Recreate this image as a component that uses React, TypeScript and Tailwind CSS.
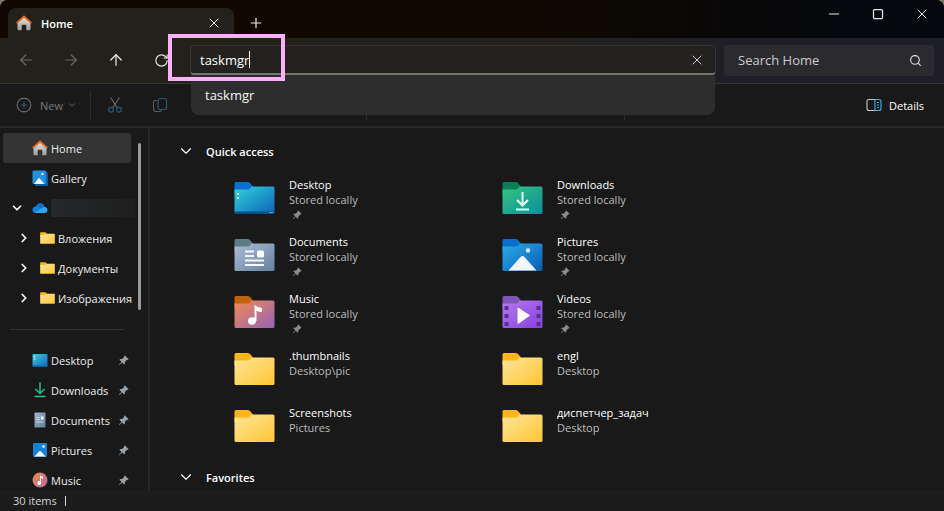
import { useId, useState } from "react";
import type { ReactNode } from "react";
import {
  ArrowLeft,
  ArrowRight,
  ArrowUp,
  ChevronDown,
  ChevronRight,
  Minus,
  Plus,
  RotateCw,
  Search,
  Square,
  X,
} from "lucide-react";
import { BsPinAngleFill } from "react-icons/bs";

type FolderKind =
  | "desktop"
  | "downloads"
  | "documents"
  | "pictures"
  | "music"
  | "videos"
  | "plain";

const folderColors: Record<FolderKind, { tab: string; from: string; to: string }> = {
  desktop: { tab: "#0a6fd0", from: "#33d3dc", to: "#0b62b8" },
  downloads: { tab: "#0b7d57", from: "#35c481", to: "#0d8f9b" },
  documents: { tab: "#5f7a87", from: "#adbdd3", to: "#6580a0" },
  pictures: { tab: "#0870cc", from: "#2cabe8", to: "#0a5cb4" },
  music: { tab: "#c1620f", from: "#f28a52", to: "#9463b8" },
  videos: { tab: "#7c57b5", from: "#b57af0", to: "#8640dd" },
  plain: { tab: "#fdb615", from: "#ffe599", to: "#fdc634" },
};

const glyphs: Partial<Record<FolderKind, ReactNode>> = {
  desktop: (
    <>
      <path d="M0.5 29.5H40.5V30.5Q40.5 32 39 32H2Q0.5 32 0.5 30.5Z" fill="#0c4e86" />
      <path d="M3 11h2v2H3zM3 15h2v2H3z" fill="#c9fbff" />
      <path d="M35 30.5h4" stroke="#6fa3cb" strokeWidth="1" />
    </>
  ),
  downloads: (
    <path
      d="M20.5 10V23M15 18L20.5 23.5L26 18M14 27.5H27"
      stroke="#e6fff5"
      strokeWidth="2"
      fill="none"
    />
  ),
  documents: (
    <>
      <path d="M11 12.5h9M11 17h9M11 21.5h19M11 26h19" stroke="#f4f8fd" strokeWidth="2" />
      <rect x="23" y="11.5" width="7" height="7" rx="1.5" fill="#fff" />
    </>
  ),
  pictures: (
    <>
      <path d="M6.5 31.5L18.5 18Q20.5 16 22.5 18L34.5 31.5Z" fill="#f1f6ff" />
      <circle cx="26" cy="11.5" r="2.2" fill="#d9f4ff" />
    </>
  ),
  music: (
    <>
      <path d="M21 9Q24 12 28 12V16Q25 16 22.5 14.5V25H20.5V9Z" fill="#fff" />
      <ellipse cx="18" cy="25" rx="4" ry="3.8" fill="#fff" />
    </>
  ),
  videos: (
    <>
      <path
        d="M2.5 10h4v4h-4zM2.5 18h4v4h-4zM2.5 26h4v4h-4zM34.5 10h4v4h-4zM34.5 18h4v4h-4zM34.5 26h4v4h-4z"
        fill="#55308f"
      />
      <path d="M16 12L27.5 19.5L16 27.5Z" fill="#fff" stroke="#fff" strokeLinejoin="round" />
    </>
  ),
};

function Folder({ kind, className }: { kind: FolderKind; className: string }) {
  const id = useId();
  const { tab, from, to } = folderColors[kind];
  return (
    <svg viewBox="0 0 41 32" className={className} aria-hidden="true">
      <defs>
        <linearGradient id={id} x1="0" y1="0" x2="1" y2="1">
          <stop offset="0" stopColor={from} />
          <stop offset="1" stopColor={to} />
        </linearGradient>
      </defs>
      <path d="M2 0H13.5Q15 0 16 1L19 4.5V12H0.5V1.5Q0.5 0 2 0Z" fill={tab} />
      <path
        d="M0.5 7.5H14Q15.5 7.5 16.5 6L17.5 4.5H39Q40.5 4.5 40.5 6V30.5Q40.5 32 39 32H2Q0.5 32 0.5 30.5Z"
        fill={`url(#${id})`}
      />
      {glyphs[kind]}
    </svg>
  );
}

function HomeIcon() {
  const id = useId();
  return (
    <svg viewBox="0 0 16 16" className="size-4" aria-hidden="true">
      <defs>
        <linearGradient id={id} x1="0" y1="0" x2="0" y2="1">
          <stop offset="0" stopColor="#e6e6e6" />
          <stop offset="1" stopColor="#9d9d9d" />
        </linearGradient>
      </defs>
      <path
        d="M1.5 7L8 1.5L14.5 7V14.2Q14.5 15.2 13.5 15.2H10.3V10.5Q10.3 9.8 9.6 9.8H6.4Q5.7 9.8 5.7 10.5V15.2H2.5Q1.5 15.2 1.5 14.2Z"
        fill={`url(#${id})`}
      />
      <path
        d="M1.2 7.6L8 1.5L14.8 7.6"
        fill="none"
        stroke="#ea6a17"
        strokeWidth="1.9"
        strokeLinecap="round"
        strokeLinejoin="round"
      />
    </svg>
  );
}

function GalleryIcon() {
  return (
    <svg viewBox="0 0 16 16" className="size-4" aria-hidden="true">
      <rect x="3" y="2" width="13" height="14" rx="1.5" fill="#0c5cab" />
      <rect x="0.5" y="0.5" width="13.5" height="13.5" rx="1.2" fill="#1f93e0" />
      <path d="M2 14L7 7.8L12.5 14Z" fill="#fff" />
      <circle cx="10.5" cy="4" r="1.2" fill="#fff" />
    </svg>
  );
}

function CloudIcon() {
  return (
    <svg viewBox="0 0 16 16" className="size-4" aria-hidden="true">
      <path d="M4 6.2Q5.500 3 8.500 3Q11.500 3.200 12.500 6.500L8 10L1.500 9Q1.500 6.700 4 6.200Z" fill="#0f6fcb" />
      <path d="M3.500 6.500Q5.500 6 7 7L13.500 11L10 13H3.500Q0.500 12.800 0.500 9.800Q0.500 7 3.500 6.500Z" fill="#1081dc" />
      <path d="M3 12.800L10.500 7.500Q12 6.300 13.500 7Q15.500 8 15.500 10.300Q15.200 13 12.500 13H4Z" fill="#2aa5f0" />
    </svg>
  );
}

function DesktopIcon() {
  const id = useId();
  return (
    <svg viewBox="0 0 16 16" className="size-4" aria-hidden="true">
      <defs>
        <linearGradient id={id} x1="0" y1="0" x2="1" y2="1">
          <stop offset="0" stopColor="#37cfe0" />
          <stop offset="1" stopColor="#0f66bd" />
        </linearGradient>
      </defs>
      <rect x="0.5" y="2" width="15" height="12.5" rx="1" fill={`url(#${id})`} />
      <path d="M0.5 13h15v0.7q0 0.8-0.8 0.8H1.3q-0.8 0-0.8-0.8Z" fill="#1477bd" />
      <path d="M2 4h1.2v1.2H2zM2 6.5h1.2v1.2H2z" fill="#d6fbff" />
    </svg>
  );
}

function DownloadIcon() {
  return (
    <svg viewBox="0 0 16 16" className="size-4" aria-hidden="true">
      <path
        d="M8 0.5V11M3.5 7L8 11.5L12.5 7M2.5 14.5H13.5"
        fill="none"
        stroke="#27c093"
        strokeWidth="1.5"
      />
    </svg>
  );
}

function DocumentIcon() {
  const id = useId();
  return (
    <svg viewBox="0 0 16 16" className="size-4" aria-hidden="true">
      <defs>
        <linearGradient id={id} x1="0" y1="0" x2="1" y2="1">
          <stop offset="0" stopColor="#a3b7cf" />
          <stop offset="1" stopColor="#5f7b9b" />
        </linearGradient>
      </defs>
      <rect x="2.5" y="0.5" width="11" height="15" rx="1" fill={`url(#${id})`} />
      <path d="M4.5 5.500h3M4.500 7.500h3M4.500 10h7" stroke="#c9d6e6" strokeWidth="1" />
      <rect x="9" y="4.5" width="2.5" height="3" fill="#fff" />
    </svg>
  );
}

function PictureIcon() {
  return (
    <svg viewBox="0 0 16 16" className="size-4" aria-hidden="true">
      <rect x="1" y="1" width="14" height="14" rx="1.2" fill="#1583d6" />
      <path d="M2.5 14.500L7.200 9.300Q8 8.500 8.800 9.300L13.500 14.500Z" fill="#fff" />
      <circle cx="11.500" cy="4.500" r="1.300" fill="#fff" />
    </svg>
  );
}

function MusicIcon() {
  const id = useId();
  return (
    <svg viewBox="0 0 16 16" className="size-4" aria-hidden="true">
      <defs>
        <linearGradient id={id} x1="0" y1="0" x2="1" y2="1">
          <stop offset="0" stopColor="#f08a50" />
          <stop offset="1" stopColor="#b864a0" />
        </linearGradient>
      </defs>
      <circle cx="8" cy="8" r="7.500" fill={`url(#${id})`} />
      <path d="M8 3Q9 4.500 11 4.500V6.500Q9.800 6.500 9 6V11H8Z" fill="#fff" />
      <circle cx="7.200" cy="11" r="1.900" fill="#fff" />
    </svg>
  );
}

function CutIcon() {
  return (
    <svg viewBox="0 0 16 18" className="h-[18px] w-4" fill="none" aria-hidden="true">
      <path d="M3.5 1.5L10.5 12M12.5 1.5L5.5 12" stroke="#6a6a6a" strokeWidth="1.1" />
      <circle cx="4" cy="13.8" r="2.4" stroke="#28566f" strokeWidth="1.2" />
      <circle cx="12" cy="13.8" r="2.4" stroke="#28566f" strokeWidth="1.2" />
    </svg>
  );
}

function CopyIcon() {
  return (
    <svg viewBox="0 0 16 16" className="size-4" fill="none" aria-hidden="true">
      <path
        d="M5 3.5H3.5Q1.5 3.5 1.5 5.5V12Q1.5 14.5 4 14.5H7.5Q9.2 14.5 9.5 13"
        stroke="#5c5c5c"
        strokeWidth="1.1"
      />
      <rect x="6" y="1.5" width="8.5" height="11" rx="2" stroke="#28566f" strokeWidth="1.2" />
    </svg>
  );
}

function NewIcon() {
  return (
    <svg viewBox="0 0 16 16" className="size-4" fill="none" aria-hidden="true">
      <circle cx="8" cy="8" r="6.9" stroke="#6a6a6a" strokeWidth="1.1" />
      <path d="M8 4.8V11.2M4.8 8H11.2" stroke="#28607f" strokeWidth="1.2" />
    </svg>
  );
}

function DetailsIcon() {
  return (
    <svg viewBox="0 0 16 14" className="h-[14px] w-4" fill="none" aria-hidden="true">
      <path d="M9 1.5H3Q1 1.5 1 3.5V10.5Q1 12.5 3 12.5H9" stroke="#c9c9c9" strokeWidth="1.1" />
      <path d="M9 1.5H13Q15 1.5 15 3.5V10.5Q15 12.5 13 12.5H9Z" stroke="#4cabe3" strokeWidth="1.1" />
      <path d="M11 4.5H13M11 7H13M11 9.5H13" stroke="#4cabe3" strokeWidth="1.1" />
    </svg>
  );
}

type SideItem = {
  label?: string;
  icon: ReactNode;
  chevron?: "down" | "right";
  child?: boolean;
  active?: boolean;
  pinned?: boolean;
};

const treeFolder = <Folder kind="plain" className="h-3 w-[15px]" />;

const treeItems: SideItem[] = [
  { label: "Home", icon: <HomeIcon />, active: true },
  { label: "Gallery", icon: <GalleryIcon /> },
  { icon: <CloudIcon />, chevron: "down" },
  { label: "Вложения", icon: treeFolder, chevron: "right", child: true },
  { label: "Документы", icon: treeFolder, chevron: "right", child: true },
  { label: "Изображения", icon: treeFolder, chevron: "right", child: true },
];

const pinnedItems: SideItem[] = [
  { label: "Desktop", icon: <DesktopIcon />, pinned: true },
  { label: "Downloads", icon: <DownloadIcon />, pinned: true },
  { label: "Documents", icon: <DocumentIcon />, pinned: true },
  { label: "Pictures", icon: <PictureIcon />, pinned: true },
  { label: "Music", icon: <MusicIcon />, pinned: true },
];

function SideRow({ item }: { item: SideItem }) {
  const Chevron = item.chevron === "down" ? ChevronDown : ChevronRight;
  return (
    <li>
      <button
        type="button"
        className={`flex h-[30px] w-full items-center text-left ${item.child ? "pl-[7px]" : ""} ${
          item.active ? "rounded-xs bg-[#333333]" : ""
        }`}
      >
        <span className="flex w-[29px] shrink-0 pl-[7px]">
          {item.chevron && <Chevron className="size-[14px] text-neutral-100" strokeWidth={3} />}
        </span>
        <span className="mr-[3px] flex w-4 shrink-0 justify-center">{item.icon}</span>
        {item.label ? (
          <span className="whitespace-nowrap text-[#ececec]">{item.label}</span>
        ) : (
          <span className="h-[18px] w-[84px] shrink-0 bg-linear-to-r from-[#25292b] to-[#1e1e1e]" />
        )}
        {item.pinned && <BsPinAngleFill className="mr-[2px] ml-auto size-[11px] shrink-0 text-[#98a0a6]" />}
      </button>
    </li>
  );
}

type Entry = { name: string; place: string; kind: FolderKind; pinned?: boolean };

const entries: Entry[] = [
  { name: "Desktop", place: "Stored locally", kind: "desktop", pinned: true },
  { name: "Downloads", place: "Stored locally", kind: "downloads", pinned: true },
  { name: "Documents", place: "Stored locally", kind: "documents", pinned: true },
  { name: "Pictures", place: "Stored locally", kind: "pictures", pinned: true },
  { name: "Music", place: "Stored locally", kind: "music", pinned: true },
  { name: "Videos", place: "Stored locally", kind: "videos", pinned: true },
  { name: ".thumbnails", place: "Desktop\\pic", kind: "plain" },
  { name: "engl", place: "Desktop", kind: "plain" },
  { name: "Screenshots", place: "Pictures", kind: "plain" },
  { name: "диспетчер_задач", place: "Desktop", kind: "plain" },
];

function SectionTitle({ children }: { children: ReactNode }) {
  return (
    <h2 className="font-semibold text-white">
      <button type="button" className="flex h-4 items-center gap-[11px] pl-[27px]">
        <ChevronDown className="size-[18px]" strokeWidth={1.5} />
        {children}
      </button>
    </h2>
  );
}

export default function App() {
  const [address, setAddress] = useState("taskmgr");
  const [query, setQuery] = useState("");

  return (
    <div className="h-screen bg-[#7d766c] font-['Open_Sans','Noto_Sans',sans-serif] text-[11px] leading-[15px]">
      <div className="flex h-full flex-col overflow-hidden rounded-t-lg bg-[#191919]">
        <header className="flex h-[38px] shrink-0 items-end bg-linear-to-r from-[#110800] from-50% to-[#06080d] to-90% pl-2 text-neutral-200">
          <div className="flex h-[30px] w-[226px] items-center rounded-t-lg bg-[#24211c] pr-3 pl-2">
            <HomeIcon />
            <span className="ml-[9px] flex-1 font-semibold text-white">Home</span>
            <button type="button" aria-label="Close tab">
              <X className="size-4" strokeWidth={1.5} />
            </button>
          </div>
          <button type="button" aria-label="New tab" className="ml-[14px] flex h-[30px] items-center">
            <Plus className="size-4" strokeWidth={1.8} />
          </button>
          <div className="ml-auto flex h-[38px] items-start pt-[5px]">
            <button type="button" aria-label="Minimize" className="flex h-[18px] w-11 items-center justify-center">
              <Minus className="size-4" strokeWidth={1.5} />
            </button>
            <button type="button" aria-label="Maximize" className="flex h-[18px] w-11 items-center justify-center">
              <Square className="size-3" strokeWidth={2.5} />
            </button>
            <button type="button" aria-label="Close" className="flex h-[18px] w-11 items-center justify-center">
              <X className="size-4" strokeWidth={1.5} />
            </button>
          </div>
        </header>

        <div className="flex h-[46px] shrink-0 items-center border-b border-[#343434] bg-linear-to-r from-[#24211b] from-30% via-[#222120] via-60% to-[#1e1f26] to-80% pr-[10px] pb-px pl-[3px]">
          <div className="flex w-[187px] shrink-0 text-neutral-200">
            <button type="button" aria-label="Back" className="flex w-[45px] justify-center text-[#6d6a65]">
              <ArrowLeft className="size-[18px]" strokeWidth={1.5} />
            </button>
            <button type="button" aria-label="Forward" className="flex w-[45px] justify-center text-[#6d6a65]">
              <ArrowRight className="size-[18px]" strokeWidth={1.5} />
            </button>
            <button type="button" aria-label="Up" className="flex w-[45px] justify-center">
              <ArrowUp className="size-[18px]" strokeWidth={1.7} />
            </button>
            <button type="button" aria-label="Refresh" className="flex w-[46px] items-center justify-center">
              <RotateCw className="size-[15px]" strokeWidth={1.8} />
            </button>
          </div>

          <div className="relative min-w-0 flex-1">
            <div className="flex h-[30px] items-center rounded-[4px] border border-b-2 border-[#373532] border-b-[#77736f] bg-[#232221] pr-[10px] pl-[9px] text-[13px] text-white">
              <input
                aria-label="Address"
                value={address}
                onChange={(e) => setAddress(e.target.value)}
                className="field-sizing-content min-w-0 leading-5 outline-none"
              />
              <span className="h-[17px] w-px bg-white" />
              <button type="button" aria-label="Clear address" className="ml-auto text-neutral-300">
                <X className="size-4" strokeWidth={1.4} />
              </button>
            </div>
            <ul className="absolute top-[30px] right-px left-px z-10 rounded-b-lg bg-[#2d2d2d] text-[13px] leading-5 text-neutral-100">
              <li>
                <button type="button" className="flex h-10 w-full items-center pl-[14px]">
                  taskmgr
                </button>
              </li>
            </ul>
            <div className="pointer-events-none absolute -top-[11px] -left-[22px] z-20 h-[47px] w-[117px] border-4 border-[#fab0fa]" />
          </div>

          <div className="ml-2 flex h-[31px] w-[210px] shrink-0 items-center rounded-[4px] bg-[#2b2b2f] pr-3 pl-[14px] text-[13px]">
            <input
              aria-label="Search Home"
              placeholder="Search Home"
              value={query}
              onChange={(e) => setQuery(e.target.value)}
              className="min-w-0 flex-1 leading-5 text-white outline-none placeholder:text-[#cbcbcb]"
            />
            <Search className="size-[13px] text-neutral-200" strokeWidth={2} />
          </div>
        </div>

        <div className="flex h-11 shrink-0 items-center border-b-2 border-[#282828] bg-[#191919] pl-4">
          <button type="button" className="flex w-[74px] items-center text-[#7a7a7a]">
            <NewIcon />
            <span className="mr-1 ml-2">New</span>
            <ChevronDown className="size-[10px]" strokeWidth={2} />
          </button>
          <div className="h-[30px] w-px bg-[#2d2d2d]" />
          <button type="button" aria-label="Cut" className="ml-4">
            <CutIcon />
          </button>
          <button type="button" aria-label="Copy" className="ml-[29px]">
            <CopyIcon />
          </button>
          <div className="ml-[198px] h-[30px] w-px bg-[#2d2d2d]" />
          <div className="ml-[257px] h-[30px] w-px bg-[#2d2d2d]" />
          <button type="button" className="mr-5 ml-auto flex items-center gap-[7px] text-white">
            <DetailsIcon />
            Details
          </button>
        </div>

        <div className="flex min-h-0 flex-1 overflow-hidden">
          <nav className="flex w-[150px] shrink-0 border-r-2 border-[#262626] pt-[5px] pl-[3px]">
            <div className="w-32 shrink-0">
              <ul>
                {treeItems.map((item, i) => (
                  <SideRow key={i} item={item} />
                ))}
              </ul>
              <hr className="mt-4 mb-[15px] mr-[7px] ml-[7px] border-[#333333]" />
              <ul>
                {pinnedItems.map((item) => (
                  <SideRow key={item.label} item={item} />
                ))}
              </ul>
            </div>
            <div className="mt-[10px] ml-[7px] h-[167px] w-[3px] rounded-full bg-[#9a9a9a]" />
          </nav>

          <main className="min-w-0 flex-1 pt-[15px]">
            <SectionTitle>Quick access</SectionTitle>
            <ul className="mt-[18px] mb-[7px] grid grid-cols-[repeat(auto-fill,268px)] pl-[84px]">
              {entries.map((entry) => (
                <li key={entry.name} className="flex h-[57px]">
                  <Folder kind={entry.kind} className="mt-[5px] h-8 w-[41px]" />
                  <div className="ml-[14px]">
                    <p className="text-white">{entry.name}</p>
                    <p className="text-[#bcbcbc]">{entry.place}</p>
                    {entry.pinned && <BsPinAngleFill className="mt-[3px] ml-[3px] size-[10px] text-[#8b8b8b]" />}
                  </div>
                </li>
              ))}
            </ul>
            <SectionTitle>Favorites</SectionTitle>
          </main>
        </div>

        <footer className="flex h-[21px] shrink-0 items-center gap-2 bg-[#1c1c1c] pl-[13px] text-[#d6d6d6]">
          <span>30 items</span>
          <span className="h-[10px] w-px bg-[#d6d6d6]" />
        </footer>
      </div>
    </div>
  );
}
